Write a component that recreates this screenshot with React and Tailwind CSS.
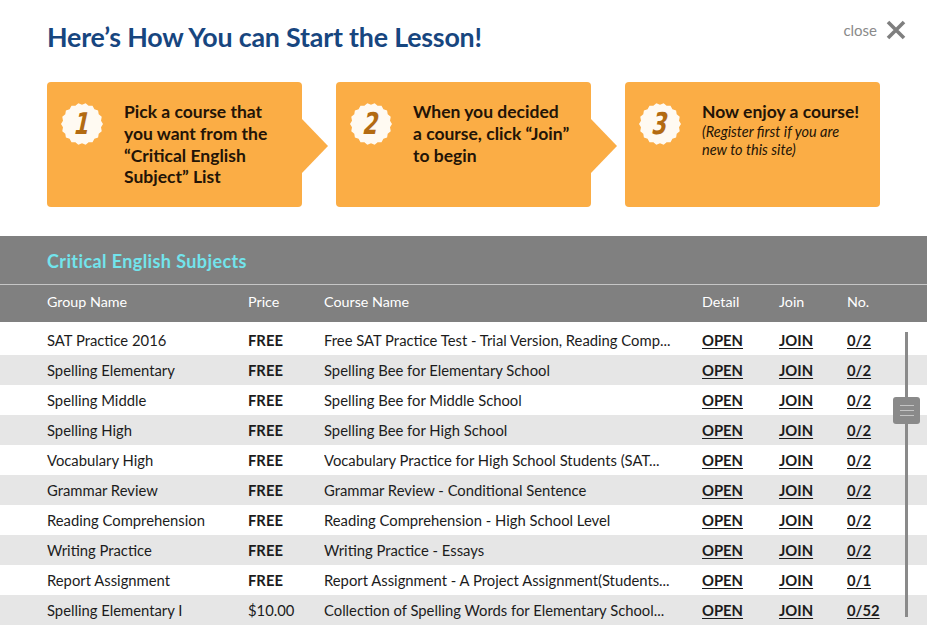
import React from 'react'

const rows = [
  ['SAT Practice 2016', 'FREE', 'Free SAT Practice Test - Trial Version, Reading Comp...', '0/2'],
  ['Spelling Elementary', 'FREE', 'Spelling Bee for Elementary School', '0/2'],
  ['Spelling Middle', 'FREE', 'Spelling Bee for Middle School', '0/2'],
  ['Spelling High', 'FREE', 'Spelling Bee for High School', '0/2'],
  ['Vocabulary High', 'FREE', 'Vocabulary Practice for High School Students (SAT...', '0/2'],
  ['Grammar Review', 'FREE', 'Grammar Review - Conditional Sentence', '0/2'],
  ['Reading Comprehension', 'FREE', 'Reading Comprehension - High School Level', '0/2'],
  ['Writing Practice', 'FREE', 'Writing Practice - Essays', '0/2'],
  ['Report Assignment', 'FREE', 'Report Assignment - A Project Assignment(Students...', '0/1'],
  ['Spelling Elementary I', '$10.00', 'Collection of Spelling Words for Elementary School...', '0/52'],
]

// scalloped seal outline
const sealPoints = (() => {
  const pts = []
  const n = 36
  for (let i = 0; i < n; i++) {
    const a = (i / n) * Math.PI * 2
    const r = i % 2 === 0 ? 21 : 19.3
    pts.push(`${(22 + r * Math.cos(a)).toFixed(2)},${(22 + r * Math.sin(a)).toFixed(2)}`)
  }
  return pts.join(' ')
})()

function Badge({ n }) {
  return (
    <div className="relative h-[44px] w-[44px] shrink-0">
      <svg width="44" height="44" viewBox="0 0 44 44" className="absolute inset-0">
        <polygon points={sealPoints} fill="#fffaf2" />
      </svg>
      <span className="absolute inset-0 flex -skew-x-12 items-center justify-center text-[30px] font-bold leading-none text-[#b36b12] [font-family:'DejaVu_Sans_Condensed','Liberation_Sans',sans-serif]">
        <span className="inline-block scale-x-[0.8]">{n}</span>
      </span>
    </div>
  )
}

function Step({ n, arrow, children }) {
  return (
    <div className="relative flex h-[125px] w-[255px] items-start rounded-[4px] bg-[#fbad45] pl-[13px] pt-[19px]">
      <div className="mt-[1px]">
        <Badge n={n} />
      </div>
      <div className="ml-[20px] text-[#231407]">{children}</div>
      {arrow && (
        <div className="absolute right-[-26px] top-[37px] h-0 w-0 border-y-[27px] border-l-[26px] border-y-transparent border-l-[#fbad45]" />
      )}
    </div>
  )
}

export default function App() {
  return (
    <div className="relative h-[625px] w-[927px] overflow-hidden bg-white [font-family:Lato,'Open_Sans',sans-serif]">
      <div className="flex items-start justify-between pl-[47px] pr-[21px] pt-[17px]">
        <h1 className="text-[26.8px] font-bold tracking-[-0.2px] text-[#17467f]">Here’s How You can Start the Lesson!</h1>
        <button className="mt-[2px] flex items-center gap-[9px] text-[15px] text-[#8a8a8a]">
          close
          <svg width="20" height="20" viewBox="0 0 20 20">
            <path d="M2 2L18 18M18 2L2 18" stroke="#7f7f7f" strokeWidth="3.6" strokeLinecap="butt" />
          </svg>
        </button>
      </div>

      <div className="mt-[25px] flex gap-[34px] pl-[47px]">
        <Step n="1" arrow>
          <p className="text-[17.5px] font-bold leading-[21.7px]">
            Pick a course that<br />you want from the<br />“Critical English<br />Subject” List
          </p>
        </Step>
        <Step n="2" arrow>
          <p className="text-[17.5px] font-bold leading-[21.7px]">
            When you decided<br />a course, click “Join”<br />to begin
          </p>
        </Step>
        <Step n="3">
          <p className="text-[17.5px] font-bold leading-[21.7px]">Now enjoy a course!</p>
          <p className="text-[14.5px] italic leading-[18px]">
            (Register first if you are<br />new to this site)
          </p>
        </Step>
      </div>

      <div className="mt-[29px] bg-[#808080]">
        <div className="flex h-[48px] items-center pl-[47px] pt-[3px] text-[18px] font-bold tracking-[0.4px] text-[#72e4ec]">
          Critical English Subjects
        </div>
        <div className="h-px bg-[#c6c6c6]" />
        <div className="grid h-[37px] grid-cols-[47px_201px_76px_378px_77px_68px_1fr] items-center pb-[3px] text-[14.3px] text-white">
          <span />
          <span>Group Name</span>
          <span>Price</span>
          <span>Course Name</span>
          <span>Detail</span>
          <span>Join</span>
          <span>No.</span>
        </div>
      </div>

      <div className="relative pt-[3px]">
        {rows.map((r, i) => (
          <div
            key={r[0]}
            className={`grid h-[30px] grid-cols-[47px_201px_76px_378px_77px_68px_1fr] items-center whitespace-nowrap text-[14.8px] text-[#1c1c1c] ${i % 2 ? 'bg-[#e6e6e6]' : 'bg-white'}`}
          >
            <span />
            <span>{r[0]}</span>
            <span className={r[1] === 'FREE' ? 'font-bold' : ''}>{r[1]}</span>
            <span className="overflow-hidden">{r[2]}</span>
            <a className="font-bold underline underline-offset-2">OPEN</a>
            <a className="font-bold underline underline-offset-2">JOIN</a>
            <a className="font-bold underline underline-offset-2">{r[3]}</a>
          </div>
        ))}

        <div className="absolute left-[905px] top-[10px] h-[285px] w-[3px] bg-[#8a8a8a]" />
        <div className="absolute left-[893px] top-[75px] flex h-[27px] w-[27px] flex-col items-center justify-center gap-[4px] rounded-[3px] bg-[#8a8a8a]">
          <span className="h-px w-[14px] bg-[#c4c4c4]" />
          <span className="h-px w-[14px] bg-[#c4c4c4]" />
          <span className="h-px w-[14px] bg-[#c4c4c4]" />
        </div>
      </div>
    </div>
  )
}
